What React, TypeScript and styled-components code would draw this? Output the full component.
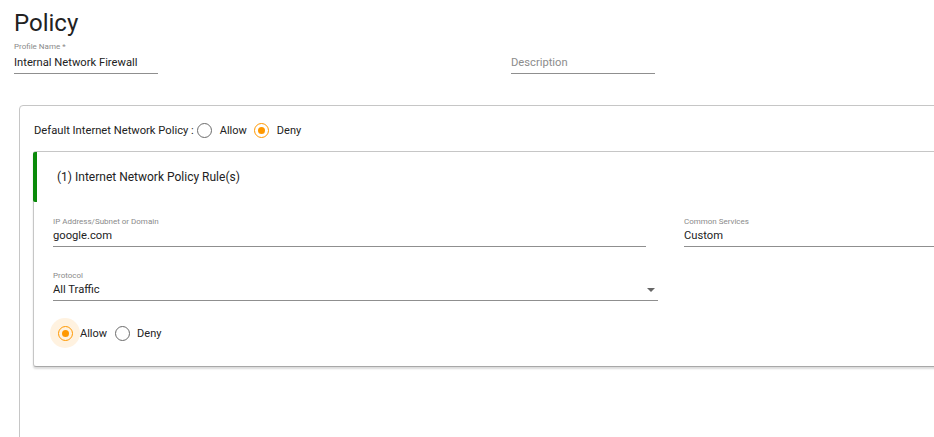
import React from "react";
import styled, { createGlobalStyle } from "styled-components";

const Global = createGlobalStyle`
  html, body { margin: 0; padding: 0; background: #fff; overflow: hidden; }
  body { font-family: Roboto, "Liberation Sans", Arial, sans-serif; color: #222; }
  * { box-sizing: border-box; }
`;

const Page = styled.div`
  padding: 9px 0 0 14px;
  width: 1100px;
`;

const Title = styled.h1`
  margin: 0;
  font-size: 24px;
  line-height: 28px;
  font-weight: 400;
  color: #222;
`;

const TopFields = styled.div`
  display: flex;
  gap: 353px;
  margin-top: 6px;
`;

const Field = styled.div<{ $w?: string }>`
  display: flex;
  flex-direction: column;
  width: ${(p) => p.$w || "auto"};
`;

const Label = styled.div`
  font-size: 8px;
  line-height: 8px;
  color: #8a8a8a;
`;

const Value = styled.div<{ $placeholder?: boolean; $gap?: number; $pad?: number }>`
  display: flex;
  align-items: center;
  justify-content: space-between;
  margin-top: ${(p) => p.$gap ?? 0}px;
  font-size: 11.2px;
  line-height: 16px;
  padding-bottom: ${(p) => p.$pad ?? 2}px;
  color: ${(p) => (p.$placeholder ? "#8c8c8c" : "#222")};
  border-bottom: 1px solid #8f8f8f;
`;

const Arrow = styled.span`
  width: 0;
  height: 0;
  margin-right: 3px;
  border-left: 4px solid transparent;
  border-right: 4px solid transparent;
  border-top: 4px solid #666;
`;

const OuterCard = styled.div`
  margin-top: 31px;
  margin-left: 5px;
  width: 1040px;
  min-height: 360px;
  border: 1px solid #c6c6c6;
  border-radius: 4px;
  padding: 9px 14px 0 13px;
`;

const RadioLine = styled.div`
  display: flex;
  align-items: center;
  height: 30px;
  font-size: 11.2px;
  color: #222;
`;

const Caption = styled.span`
  margin-left: 1px;
  margin-right: -4px;
`;

const RadioText = styled.span`
  font-size: 11px;
  color: #222;
`;

const RadioBox = styled.span<{ $halo?: boolean }>`
  width: 30px;
  height: 30px;
  border-radius: 50%;
  display: flex;
  align-items: center;
  justify-content: center;
  background: ${(p) => (p.$halo ? "rgba(255, 152, 0, 0.12)" : "transparent")};
`;

const Circle = styled.span<{ $on?: boolean }>`
  width: 15px;
  height: 15px;
  border-radius: 50%;
  border: 1.5px solid ${(p) => (p.$on ? "#ff9800" : "#6b6b6b")};
  display: flex;
  align-items: center;
  justify-content: center;
  &::after {
    content: "";
    display: ${(p) => (p.$on ? "block" : "none")};
    width: 7px;
    height: 7px;
    border-radius: 50%;
    background: #ff9800;
  }
`;

const InnerCard = styled.div`
  margin-top: 6px;
  border: 1px solid #c6c6c6;
  border-bottom-color: #a8a8a8;
  border-radius: 3px;
  box-shadow: 0 2px 2px rgba(0, 0, 0, 0.14);
  padding-bottom: 18px;
`;

const RuleHeader = styled.div`
  height: 50px;
  margin-left: -1px;
  border-left: 4px solid #0a8a0a;
  border-top-left-radius: 2px;
  border-bottom-left-radius: 2px;
  display: flex;
  align-items: center;
  padding-left: 20px;
  font-size: 12px;
  color: #222;
`;

const RuleBody = styled.div`
  padding: 16px 0 0 19px;
  display: flex;
  flex-direction: column;
`;

const FieldGrid = styled.div`
  display: grid;
  grid-template-columns: 593px 1fr;
  column-gap: 38px;
`;

const ProtocolRow = styled.div`
  margin-top: 25px;
`;

const BottomRadios = styled(RadioLine)`
  margin-top: 17px;
  margin-left: -3px;
`;

type Opt = { label: string; on?: boolean; halo?: boolean };

const Radios = ({ opts }: { opts: Opt[] }) => (
  <>
    {opts.map((o) => (
      <React.Fragment key={o.label}>
        <RadioBox $halo={o.halo}>
          <Circle $on={o.on} />
        </RadioBox>
        <RadioText>{o.label}</RadioText>
      </React.Fragment>
    ))}
  </>
);

export default function App() {
  return (
    <>
      <Global />
      <Page>
        <Title>Policy</Title>
        <TopFields>
          <Field $w="144px">
            <Label>Profile Name *</Label>
            <Value $gap={4}>Internal Network Firewall</Value>
          </Field>
          <Field $w="144px">
            <Label>&nbsp;</Label>
            <Value $gap={4} $placeholder>
              Description
            </Value>
          </Field>
        </TopFields>
        <OuterCard>
          <RadioLine>
            <Caption>Default Internet Network Policy :</Caption>
            <Radios opts={[{ label: "Allow" }, { label: "Deny", on: true }]} />
          </RadioLine>
          <InnerCard>
            <RuleHeader>(1) Internet Network Policy Rule(s)</RuleHeader>
            <RuleBody>
              <FieldGrid>
                <Field>
                  <Label>IP Address/Subnet or Domain</Label>
                  <Value $gap={2}>google.com</Value>
                </Field>
                <Field>
                  <Label>Common Services</Label>
                  <Value $gap={2}>Custom</Value>
                </Field>
              </FieldGrid>
              <ProtocolRow>
                <Field $w="605px">
                  <Label>Protocol</Label>
                  <Value $gap={2}>
                    All Traffic
                    <Arrow />
                  </Value>
                </Field>
              </ProtocolRow>
              <BottomRadios>
                <Radios
                  opts={[
                    { label: "Allow", on: true, halo: true },
                    { label: "Deny" },
                  ]}
                />
              </BottomRadios>
            </RuleBody>
          </InnerCard>
        </OuterCard>
      </Page>
    </>
  );
}
